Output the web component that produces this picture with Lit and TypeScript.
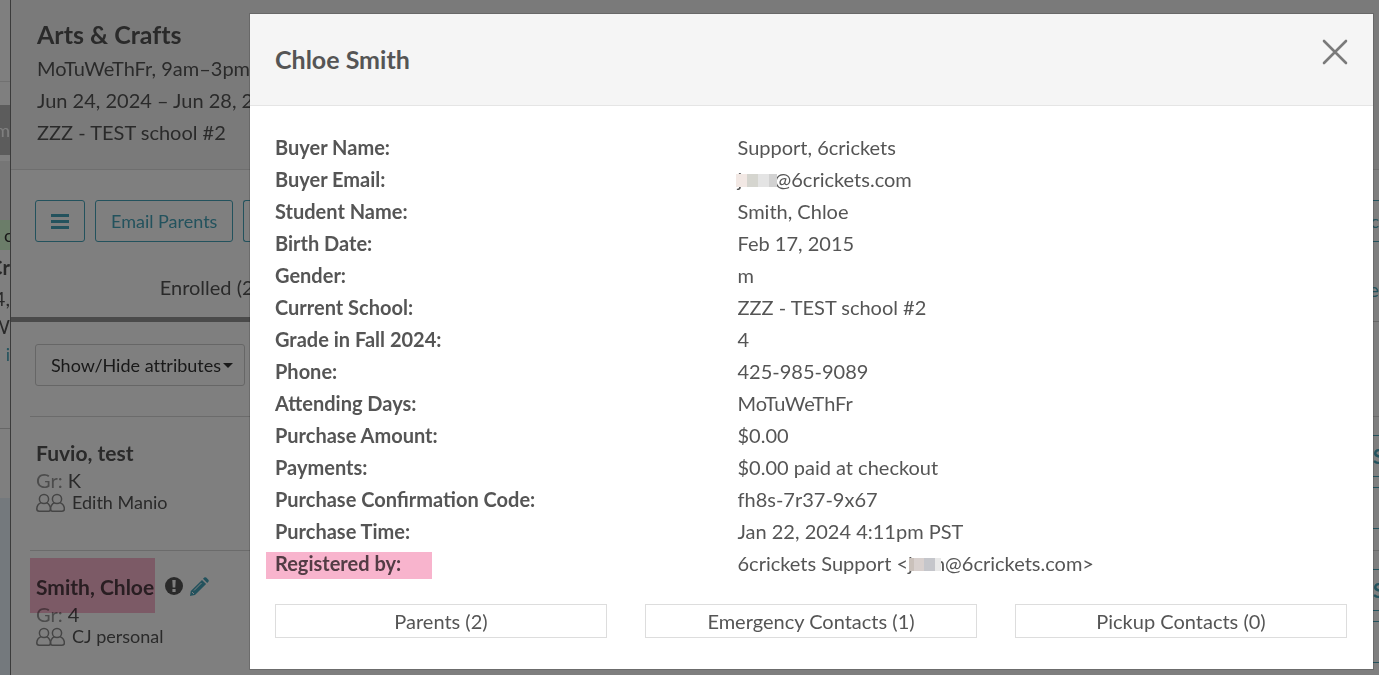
import { LitElement, html, css, svg } from "lit";
import { customElement, property } from "lit/decorators.js";

const SANS = css`Lato, "Open Sans", sans-serif`;

const parentsIcon = svg`
  <g fill="none" stroke="#8a8a8a" stroke-width="1.5">
    <circle cx="8" cy="6" r="4.6" />
    <circle cx="21" cy="6" r="4.6" />
    <path d="M5 9.6C2 11 .8 13 .8 16c0 1.6.8 2.2 2.4 2.2h9.6c1.200 0 1.700-.6 1.700-2.200 0-3-1.500-5-4-6.400" />
    <path d="M18.500 9.600c-2.500 1.400-4 3.400-4 6.400 0 1.600.6 2.200 1.900 2.200h9.600c1.600 0 2.400-.6 2.400-2.200 0-3-1.400-5-4.400-6.400" />
  </g>`;

/** Narrow strip of the schedule that stays visible beside the roster. */
@customElement("schedule-strip")
export class ScheduleStrip extends LitElement {
  static styles = css`
    :host { display: flex; flex-direction: column; overflow: hidden; background: #fff; font-family: ${SANS}; }
    .cell { display: flex; justify-content: flex-end; align-items: center; white-space: nowrap; flex: none; box-sizing: border-box; }
    .top { height: 82px; border-bottom: 1px solid #e2e2e2; }
    .gap { height: 23px; }
    .month { height: 50px; background: #b8b8b8; color: #fff; font-size: 18px; }
    .seam { height: 6px; }
    .shade { height: 59px; background: #ececec; }
    .open { height: 30px; background: #d7fbd3; color: #333; font-size: 18px; justify-content: flex-start; padding-left: 4px; }
    .line { height: 28px; color: #555; font-size: 20px; }
    .bold { font-weight: 700; height: 34px; }
    .link { color: #47a5ba; font-size: 18px; }
    .rest { height: 61px; border-bottom: 1px solid #ccc; }
    .pad { height: 69px; }
    .blue { flex: 1; background: #e8f2fa; }
  `;
  render() {
    return html`
      <div class="cell top"></div>
      <div class="cell gap"></div>
      <div class="cell month">m</div>
      <div class="cell seam"></div>
      <div class="cell shade"></div>
      <div class="cell open">c</div>
      <div class="cell line bold">Cr</div>
      <div class="cell line">4,</div>
      <div class="cell line">W</div>
      <div class="cell line link">n i</div>
      <div class="cell rest"></div>
      <div class="cell pad"></div>
      <div class="blue"></div>
    `;
  }
}

@customElement("student-row")
export class StudentRow extends LitElement {
  @property() name = "";
  @property() grade = "";
  @property() parent = "";
  @property({ type: Boolean }) marked = false;

  static styles = css`
    :host { display: flex; justify-content: space-between; height: 134px; box-sizing: border-box; border-top: 1px solid #d6d6d6; padding: 18px 0 0 6px; color: #555; }
    .name { display: flex; align-items: center; gap: 11px; font-size: 21px; line-height: 35px; font-weight: 700; }
    .who { position: relative; }
    .marked::after { content: ""; position: absolute; left: -6px; right: -1px; top: -11px; height: 55px; background: #f8b4cd; mix-blend-mode: multiply; }
    .grade { font-size: 20px; line-height: 20px; }
    .grade span { color: #999; }
    .parent { display: flex; align-items: center; gap: 7px; font-size: 18px; line-height: 25px; }
    .badges { display: flex; gap: 6px; }
    .actions { display: flex; flex-direction: column; gap: 10px; flex: none; width: 29px; }
    button { height: 42px; box-sizing: border-box; border: 1px solid #47a5ba; border-right: 0; background: none; color: #47a5ba; font: 700 20px/20px ${SANS}; padding: 0 0 0 22px; text-align: left; overflow: hidden; }
  `;
  render() {
    return html`
      <div>
        <div class="name">
          <span class="who ${this.marked ? "marked" : ""}">${this.name}</span>
          ${this.marked
            ? html`<span class="badges">
                <svg width="18" height="18" viewBox="0 0 18 18"><circle cx="9" cy="9" r="9" fill="#555" /><path d="M7.300 3h3.400l-.4 7.500H7.700zM7.400 12h3.200v3H7.400z" fill="#fff" /></svg>
                <svg width="20" height="20" viewBox="0 0 20 20" fill="#47a5ba"><path d="M14 1.800 15.200.6q1-.9 2 0l2.200 2.200q.8 1 0 1.900L18.200 5.900zM13 2.900l4.100 4.100L6 18.100 1 19l.8-5z" /><path d="M5 13.500 12.500 6M3 15l2 2" stroke="#fff" stroke-width="1" /></svg>
              </span>`
            : ""}
        </div>
        <div class="grade"><span>Gr:</span> ${this.grade}</div>
        <div class="parent"><svg width="29" height="19" viewBox="0 0 29 19">${parentsIcon}</svg>${this.parent}</div>
      </div>
      <div class="actions"><button>S</button><button aria-label="More"></button></div>
    `;
  }
}

@customElement("roster-panel")
export class RosterPanel extends LitElement {
  static styles = css`
    :host { display: block; overflow: hidden; background: #fff; color: #555; font-family: ${SANS}; font-size: 20px; font-variant-ligatures: none; border-left: 1px solid #777; }
    header { background: #f5f5f5; border-bottom: 1px solid #ddd; padding: 16px 26px 21px; }
    h1 { margin: 0; font-size: 25px; line-height: 36px; }
    p { margin: 0; line-height: 32px; }
    .tools { display: flex; gap: 10px; padding: 30px 0 0 24px; white-space: nowrap; }
    button { box-sizing: border-box; height: 42px; border: 1px solid #47a5ba; border-radius: 3px; background: none; color: #47a5ba; font: 18px/20px ${SANS}; font-variant-ligatures: none; padding: 0 15px; }
    .menu { width: 50px; padding: 0; }
    .menu svg { display: block; margin: auto; }
    .wide { flex: 1; text-align: right; padding: 0 0 0 15px; border-right: 0; border-radius: 3px 0 0 3px; }
    .tabs { display: flex; margin-top: 14px; }
    .tab { flex: 1; box-sizing: border-box; height: 66px; border: 0; border-bottom: 1px solid #ccc; border-radius: 0; padding: 0; font-size: 20px; text-align: right; color: #47a5ba; }
    .active { flex: none; width: 29%; color: #555; border-bottom: 5px solid #959595; text-align: center; }
    .filter { margin: 22px 0 30px 24px; padding: 0 11px 0 15px; font-size: 18px; color: #333; border-color: #ccc; display: flex; align-items: center; gap: 2px; }
    .list { padding-left: 19px; }
  `;
  render() {
    return html`
      <header>
        <h1>Arts &amp; Crafts</h1>
        <p>MoTuWeThFr, 9am–3pm</p>
        <p>Jun 24, 2024 – Jun 28, 2024</p>
        <p>ZZZ - TEST school #2</p>
      </header>
      <div class="tools">
        <button class="menu" aria-label="Menu">
          <svg width="18" height="15" viewBox="0 0 18 15"><path d="M0 1.500h18M0 7.500h18M0 13.500h18" stroke="#47a5ba" stroke-width="3" /></svg>
        </button>
        <button>Email Parents</button>
        <button class="wide">c</button>
      </div>
      <div class="tabs">
        <button class="tab active">Enrolled (2)</button>
        <button class="tab">e</button>
      </div>
      <button class="filter">Show/Hide attributes<svg width="10" height="5" viewBox="0 0 10 5"><path d="M0 0h10L5 5z" fill="#333" /></svg></button>
      <div class="list">
        <student-row name="Fuvio, test" grade="K" parent="Edith Manio"></student-row>
        <student-row name="Smith, Chloe" grade="4" parent="CJ personal" marked></student-row>
      </div>
    `;
  }
}

@customElement("student-dialog")
export class StudentDialog extends LitElement {
  static styles = css`
    :host { display: block; background: #fff; color: #555; font-family: ${SANS}; font-size: 20px; box-shadow: 0 0 0 1px rgba(0, 0, 0, 0.15); }
    header { display: flex; justify-content: space-between; align-items: flex-start; background: #f5f5f5; border-bottom: 1px solid #e5e5e5; padding: 25px 25px 26px 25px; }
    h2 { margin: 0; font-size: 25px; line-height: 40px; }
    .close { border: 0; background: none; padding: 0; height: 26px; }
    .close svg { display: block; }
    .body { padding: 25px 26px 31px 25px; }
    dl { margin: 0; }
    .row { display: grid; grid-template-columns: repeat(12, 1fr); column-gap: 38px; line-height: 32px; }
    dt { grid-column: 1 / span 5; font-weight: 700; }
    dd { grid-column: 6 / span 7; margin: 0; font-variant-ligatures: none; }
    .marked { position: relative; }
    .marked::after { content: ""; position: absolute; left: -9px; top: 5px; width: 166px; height: 27px; background: #f8b4cd; mix-blend-mode: multiply; }
    .hidden { position: relative; display: inline-flex; justify-content: space-between; width: 37px; }
    .mosaic { position: absolute; left: -2px; top: 11px; width: 41px; height: 13px; background: linear-gradient(90deg, #f2e8e4 0 11px, #d5d5cf 11px 22px, #e4e4e4 22px 33px, #d2d2d2 33px); }
    .cool { left: 1px; width: 32px; background: linear-gradient(90deg, #cac1bb 0 5px, #d8d0ce 5px 15px, #c5c6cb 15px 26px, #e9e9e9 26px); }
    .contacts { display: grid; grid-template-columns: repeat(3, 1fr); gap: 38px; margin-top: 25px; }
    .contacts button { height: 34px; box-sizing: border-box; border: 1px solid #ddd; background: #fff; color: #555; font: 20px/30px ${SANS}; padding: 0; }
  `;
  render() {
    const rows: [string, unknown][] = [
      ["Buyer Name:", "Support, 6crickets"],
      ["Buyer Email:", html`<span class="hidden">j<i class="mosaic"></i></span>@6crickets.com`],
      ["Student Name:", "Smith, Chloe"],
      ["Birth Date:", "Feb 17, 2015"],
      ["Gender:", "m"],
      ["Current School:", "ZZZ - TEST school #2"],
      ["Grade in Fall 2024:", "4"],
      ["Phone:", "425-985-9089"],
      ["Attending Days:", "MoTuWeThFr"],
      ["Purchase Amount:", "$0.00"],
      ["Payments:", "$0.00 paid at checkout"],
      ["Purchase Confirmation Code:", "fh8s-7r37-9x67"],
      ["Purchase Time:", "Jan 22, 2024 4:11pm PST"],
      ["Registered by:", html`6crickets Support &lt;<span class="hidden"><span>j</span><span>n</span><i class="mosaic cool"></i></span>@6crickets.com&gt;`],
    ];
    return html`
      <header>
        <h2>Chloe Smith</h2>
        <button class="close" aria-label="Close">
          <svg width="26" height="26" viewBox="0 0 26 26"><path d="M2 2l22 22M24 2 2 24" stroke="#7a7a7a" stroke-width="2.600" stroke-linecap="round" /></svg>
        </button>
      </header>
      <div class="body">
        <dl>
          ${rows.map(
            ([label, value]) => html`<div class="row">
              <dt class=${label === "Registered by:" ? "marked" : ""}>${label}</dt>
              <dd>${value}</dd>
            </div>`
          )}
        </dl>
        <div class="contacts">
          <button>Parents (2)</button>
          <button>Emergency Contacts (1)</button>
          <button>Pickup Contacts (0)</button>
        </div>
      </div>
    `;
  }
}

@customElement("app-root")
export class AppRoot extends LitElement {
  static styles = css`
    :host { display: block; position: relative; height: 100vh; overflow: hidden; }
    .page { display: grid; grid-template-columns: 10px 1fr; height: 100%; }
    .overlay { position: absolute; inset: 0; background: rgba(0, 0, 0, 0.5); padding: 14px 6px 6px 250px; }
  `;
  render() {
    return html`
      <div class="page">
        <schedule-strip></schedule-strip>
        <roster-panel></roster-panel>
      </div>
      <div class="overlay">
        <student-dialog role="dialog" aria-label="Chloe Smith"></student-dialog>
      </div>
    `;
  }
}
